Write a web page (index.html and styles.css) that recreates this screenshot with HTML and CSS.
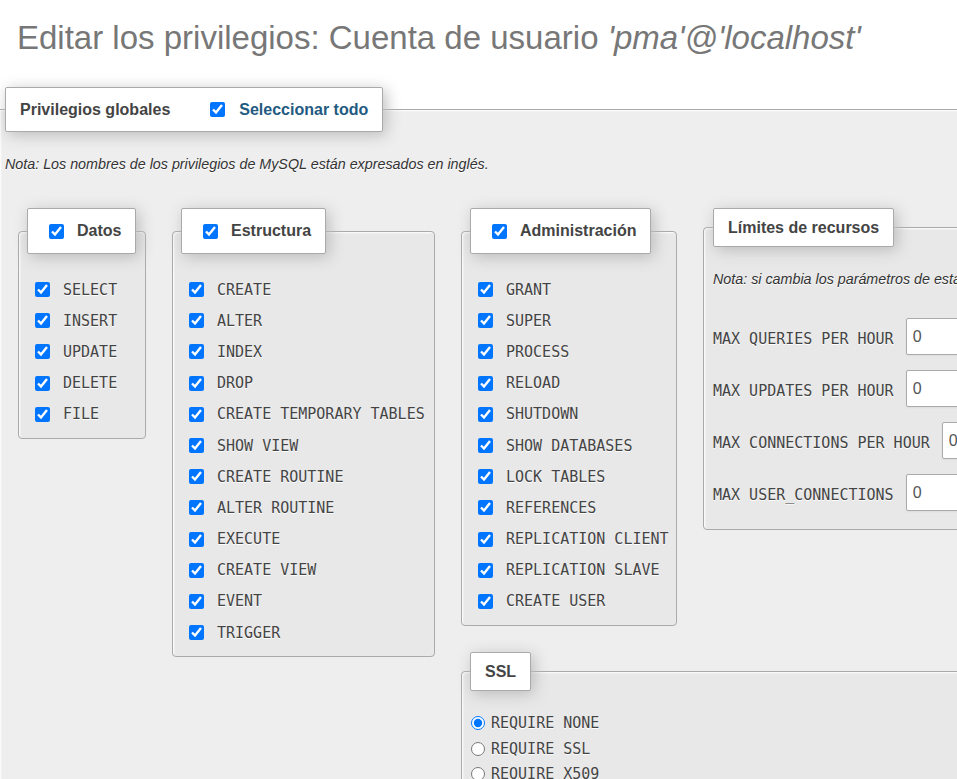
FILE: index.html
```html
<!DOCTYPE html>
<html lang="es">
<head>
<meta charset="utf-8">
<title>Editar los privilegios</title>
<link rel="stylesheet" href="styles.css">
</head>
<body>
<h2 class="page-title">Editar los privilegios: Cuenta de usuario <em>'pma'@'localhost'</em></h2>
<form class="priv-form">
  <fieldset class="global">
    <legend class="legend global-legend">
      <span class="legend-row">
        <span class="legend-title">Privilegios globales</span>
        <label class="select-all"><input type="checkbox" class="legend-check" checked><span>Seleccionar todo</span></label>
      </span>
    </legend>
    <p class="note">Nota: Los nombres de los privilegios de MySQL están expresados en inglés.</p>
    <div class="priv-grid">
      <fieldset class="group group-datos">
        <legend class="legend group-legend"><label class="legend-row"><input type="checkbox" class="legend-check" checked><span>Datos</span></label></legend>
        <div class="priv-list">
          <label class="priv"><input type="checkbox" checked><code>SELECT</code></label>
          <label class="priv"><input type="checkbox" checked><code>INSERT</code></label>
          <label class="priv"><input type="checkbox" checked><code>UPDATE</code></label>
          <label class="priv"><input type="checkbox" checked><code>DELETE</code></label>
          <label class="priv"><input type="checkbox" checked><code>FILE</code></label>
        </div>
      </fieldset>
      <fieldset class="group group-estructura">
        <legend class="legend group-legend"><label class="legend-row"><input type="checkbox" class="legend-check" checked><span>Estructura</span></label></legend>
        <div class="priv-list">
          <label class="priv"><input type="checkbox" checked><code>CREATE</code></label>
          <label class="priv"><input type="checkbox" checked><code>ALTER</code></label>
          <label class="priv"><input type="checkbox" checked><code>INDEX</code></label>
          <label class="priv"><input type="checkbox" checked><code>DROP</code></label>
          <label class="priv"><input type="checkbox" checked><code>CREATE TEMPORARY TABLES</code></label>
          <label class="priv"><input type="checkbox" checked><code>SHOW VIEW</code></label>
          <label class="priv"><input type="checkbox" checked><code>CREATE ROUTINE</code></label>
          <label class="priv"><input type="checkbox" checked><code>ALTER ROUTINE</code></label>
          <label class="priv"><input type="checkbox" checked><code>EXECUTE</code></label>
          <label class="priv"><input type="checkbox" checked><code>CREATE VIEW</code></label>
          <label class="priv"><input type="checkbox" checked><code>EVENT</code></label>
          <label class="priv"><input type="checkbox" checked><code>TRIGGER</code></label>
        </div>
      </fieldset>
      <fieldset class="group group-admin">
        <legend class="legend group-legend"><label class="legend-row"><input type="checkbox" class="legend-check" checked><span>Administración</span></label></legend>
        <div class="priv-list">
          <label class="priv"><input type="checkbox" checked><code>GRANT</code></label>
          <label class="priv"><input type="checkbox" checked><code>SUPER</code></label>
          <label class="priv"><input type="checkbox" checked><code>PROCESS</code></label>
          <label class="priv"><input type="checkbox" checked><code>RELOAD</code></label>
          <label class="priv"><input type="checkbox" checked><code>SHUTDOWN</code></label>
          <label class="priv"><input type="checkbox" checked><code>SHOW DATABASES</code></label>
          <label class="priv"><input type="checkbox" checked><code>LOCK TABLES</code></label>
          <label class="priv"><input type="checkbox" checked><code>REFERENCES</code></label>
          <label class="priv"><input type="checkbox" checked><code>REPLICATION CLIENT</code></label>
          <label class="priv"><input type="checkbox" checked><code>REPLICATION SLAVE</code></label>
          <label class="priv"><input type="checkbox" checked><code>CREATE USER</code></label>
        </div>
      </fieldset>
      <fieldset class="group group-limits">
        <legend class="legend plain-legend"><span class="legend-row legend-row-plain">Límites de recursos</span></legend>
        <p class="limits-note">Nota: si cambia los parámetros de estas opciones a 0 (cero), remueve la restricción.</p>
        <div class="limit-list">
          <div class="limit"><label for="mqh"><code>MAX QUERIES PER HOUR</code></label><input id="mqh" type="number" value="0"></div>
          <div class="limit"><label for="muh"><code>MAX UPDATES PER HOUR</code></label><input id="muh" type="number" value="0"></div>
          <div class="limit"><label for="mch"><code>MAX CONNECTIONS PER HOUR</code></label><input id="mch" type="number" value="0"></div>
          <div class="limit"><label for="muc"><code>MAX USER_CONNECTIONS</code></label><input id="muc" type="number" value="0"></div>
        </div>
      </fieldset>
      <fieldset class="group group-ssl">
        <legend class="legend plain-legend"><span class="legend-row legend-row-plain">SSL</span></legend>
        <div class="ssl-list">
          <label class="ssl-opt"><input type="radio" name="ssl" checked><code>REQUIRE NONE</code></label>
          <label class="ssl-opt"><input type="radio" name="ssl"><code>REQUIRE SSL</code></label>
          <label class="ssl-opt"><input type="radio" name="ssl"><code>REQUIRE X509</code></label>
          <label class="ssl-opt"><input type="radio" name="ssl"><code>SPECIFIED</code></label>
        </div>
      </fieldset>
    </div>
  </fieldset>
</form>
</body>
</html>
```

FILE: styles.css
```css
* {
  box-sizing: border-box;
}

html,
body {
  margin: 0;
  padding: 0;
  overflow: hidden;
  background: #fff;
}

body {
  width: 957px;
  height: 779px;
  font-family: "Liberation Sans", Arial, sans-serif;
  color: #444;
}

.page-title {
  margin: 19px 0 0 0;
  padding: 0 0 0 17px;
  font-size: 33px;
  line-height: 37px;
  font-weight: normal;
  color: #777;
  white-space: nowrap;
  text-shadow: 0 1px 0 #fff;
}

.page-title em {
  font-style: italic;
}

.priv-form {
  margin: 0;
}

.global {
  margin: 31px 0 0 0;
  width: 1400px;
  min-width: 0;
  padding: 0 0 60px 5px;
  border: 1px solid #aaa;
  border-left: 0;
  background: #eee;
  box-shadow: 1px 1px 2px #fff inset;
  text-shadow: 0 1px 0 #fff;
}

.legend {
  margin: 0;
  padding: 0 14px;
  border: 1px solid #aaa;
  border-radius: 2px;
  background: #fff;
  box-shadow: 3px 3px 15px #bbb;
  font-weight: bold;
  font-size: 16px;
  color: #444;
  white-space: nowrap;
}

.legend-row {
  display: flex;
  align-items: center;
  height: 44px;
}

.global-legend .legend-row {
  height: 43px;
}

.legend-row-plain {
  height: 37px;
}

.legend-title {
  color: #444;
}

.select-all {
  display: flex;
  align-items: center;
  color: #235a81;
}

.global-legend .legend-check {
  margin: 0 14px 0 40px;
}

input[type="checkbox"] {
  width: 15px;
  height: 15px;
  margin: 0;
  flex: none;
}

.legend-check {
  width: 16px;
  height: 16px;
}

.group-legend .legend-check {
  margin: 0 13px 0 7px;
}

.note {
  margin: 24px 0 0 0;
  font-size: 14.3px;
  line-height: 16px;
  font-style: italic;
  color: #333;
  white-space: nowrap;
}

.priv-grid {
  display: grid;
  grid-template-columns: 128px 263px 216px 460px;
  column-gap: 26px;
  row-gap: 26px;
  align-items: start;
  margin: 36px 0 0 13px;
}

.group {
  margin: 0;
  min-width: 0;
  padding: 0 8px 8px 8px;
  border: 1px solid #aaa;
  border-radius: 4px;
  background: #e8e8e8;
  box-shadow: 1px 1px 2px #fff inset;
}

.group-datos {
  grid-column: 1;
  grid-row: 1;
}

.group-estructura {
  grid-column: 2;
  grid-row: 1 / span 2;
}

.group-admin {
  grid-column: 3;
  grid-row: 1;
}

.group-limits {
  grid-column: 4;
  grid-row: 1;
  padding-left: 9px;
  padding-bottom: 11px;
}

.group-ssl {
  grid-column: 3 / span 2;
  grid-row: 2;
  padding-bottom: 40px;
}

.priv-list {
  padding-top: 20px;
}

.priv {
  display: flex;
  align-items: center;
  gap: 13px;
  height: 31.2px;
  padding-left: 8px;
  white-space: nowrap;
}

code {
  font-family: "DejaVu Sans Mono", "Liberation Mono", monospace;
  font-size: 15px;
  color: #444;
}

.limits-note {
  margin: 24px 0 0 0;
  font-size: 14.3px;
  line-height: 17px;
  font-style: italic;
  color: #333;
  white-space: nowrap;
}

.limit-list {
  margin-top: 22px;
}

.limit {
  display: flex;
  align-items: center;
  gap: 12px;
  height: 52px;
  white-space: nowrap;
}

.limit label {
  padding-top: 5px;
}

.limit input {
  flex: none;
  width: 160px;
  height: 37px;
  margin: 0;
  padding: 2px 6px 0 6px;
  border: 1px solid #aaa;
  border-radius: 2px;
  background: #fff;
  box-shadow: 0 1px 2px #ddd;
  font-family: "Liberation Sans", Arial, sans-serif;
  font-size: 16px;
  color: #555;
}

.ssl-list {
  padding-top: 19.5px;
}

.ssl-opt {
  display: flex;
  align-items: center;
  gap: 6px;
  height: 25.5px;
  padding-left: 1px;
  white-space: nowrap;
}

input[type="radio"] {
  width: 14px;
  height: 14px;
  margin: 0;
  flex: none;
}
```
